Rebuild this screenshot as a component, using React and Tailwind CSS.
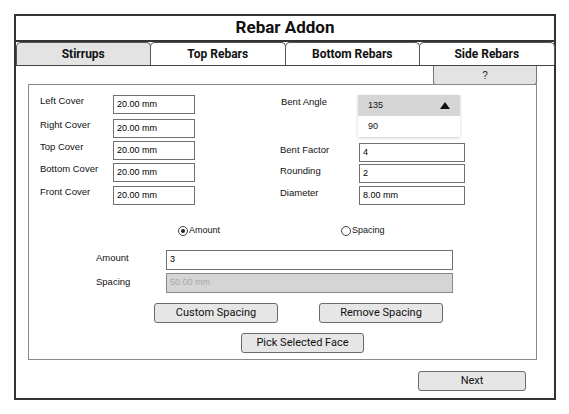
import React from 'react';

const font = { fontFamily: '"Liberation Sans", Arial, sans-serif' };
const roboto = { fontFamily: 'Roboto, "Liberation Sans", sans-serif' };

const leftRows = [
  { label: 'Left Cover', value: '20.00 mm', mt: 'mt-0' },
  { label: 'Right Cover', value: '20.00 mm', mt: 'mt-[5px]' },
  { label: 'Top Cover', value: '20.00 mm', mt: 'mt-[3px]' },
  { label: 'Bottom Cover', value: '20.00 mm', mt: 'mt-[3px]' },
  { label: 'Front Cover', value: '20.00 mm', mt: 'mt-[4px]' },
];

const rightRows = [
  { label: 'Bent Factor', value: '4', mt: 'mt-[6px]' },
  { label: 'Rounding', value: '2', mt: 'mt-[2px]' },
  { label: 'Diameter', value: '8.00 mm', mt: 'mt-[3px]' },
];

const Field = ({ value, className }) => (
  <div className={`h-[19px] border border-[#707070] bg-white flex items-center pl-[3px] text-[9px] text-black ${className}`}>
    {value}
  </div>
);

const Btn = ({ children, className }) => (
  <button
    className={`h-[20px] border border-[#6a6a6a] rounded-[3px] bg-[#e6e6e6] text-[11px] text-[#111] ${className}`}
    style={roboto}
  >
    {children}
  </button>
);

const Radio = ({ checked, label }) => (
  <div className="flex items-center gap-[1px] text-[9px] text-[#111]">
    <div className="w-[10px] h-[10px] rounded-full border border-[#444] flex items-center justify-center">
      {checked && <div className="w-[4px] h-[4px] rounded-full bg-[#222]" />}
    </div>
    <span>{label}</span>
  </div>
);

export default function App() {
  const tabs = ['Stirrups', 'Top Rebars', 'Bottom Rebars', 'Side Rebars'];
  return (
    <div className="w-[569px] h-[414px] bg-white pt-[14px] pl-[14px]" style={font}>
      <div className="w-[542px] h-[386px] border-2 border-[#333] flex flex-col">
        <div
          className="h-[26px] border-b-2 border-[#333] flex items-center justify-center text-[17px] font-bold text-[#111]"
          style={roboto}
        >
          Rebar Addon
        </div>
        <div className="h-[24px] flex border-b border-[#444]" style={roboto}>
          {tabs.map((t, i) => (
            <div
              key={t}
              className={`flex-1 -mx-[0.5px] rounded-t-[5px] border-x border-t border-[#555] flex items-center justify-center text-[12px] font-bold text-[#111] ${i === 0 ? 'bg-[#e3e3e3]' : 'bg-white'}`}
            >
              {t}
            </div>
          ))}
        </div>
        <div className="flex-1 pl-[12px] pr-[17px] flex flex-col">
          <div className="flex justify-end">
            <div className="w-[104px] h-[19px] border border-t-0 border-[#777] rounded-b-[3px] bg-[#e3e3e3] flex items-center justify-center text-[10px] text-[#222]">
              ?
            </div>
          </div>
          <div className="h-[276px] -mt-[1px] border border-[#8a8a8a] flex flex-col">
            <div className="flex pt-[10px]">
              <div className="pl-[11px] w-[251px] flex flex-col">
                {leftRows.map((r) => (
                  <div key={r.label} className={`flex items-start ${r.mt}`}>
                    <div className="w-[73px] text-[9.5px] leading-[12px] text-[#111]">{r.label}</div>
                    <Field value={r.value} className="w-[82px]" />
                  </div>
                ))}
              </div>
              <div className="flex flex-col">
                <div className="flex items-start">
                  <div className="w-[78px] pl-[1px] text-[9.5px] leading-[14px] text-[#111]">Bent Angle</div>
                  <div className="w-[102px] shadow-[0_1px_3px_rgba(0,0,0,0.2)]">
                    <div className="h-[21px] bg-[#d5d5d5] flex items-center justify-between pl-[10px] pr-[10px] text-[9px] text-[#111]">
                      <span>135</span>
                      <svg width="10" height="7" viewBox="0 0 10 7">
                        <path d="M0 7 L5 0 L10 7 Z" fill="#111" />
                      </svg>
                    </div>
                    <div className="h-[21px] bg-white flex items-center pl-[10px] text-[9px] text-[#111]">90</div>
                  </div>
                </div>
                {rightRows.map((r) => (
                  <div key={r.label} className={`flex items-start ${r.mt}`}>
                    <div className="w-[79px] pt-[1px] text-[9.5px] leading-[12px] text-[#111]">{r.label}</div>
                    <Field value={r.value} className="w-[106px]" />
                  </div>
                ))}
              </div>
            </div>
            <div className="flex mt-[20px] h-[12px] items-center">
              <div className="ml-[149px]">
                <Radio checked label="Amount" />
              </div>
              <div className="ml-[121px]">
                <Radio label="Spacing" />
              </div>
            </div>
            <div className="flex items-start mt-[13px]">
              <div className="pl-[67px] w-[137px] pt-[2px] text-[9.5px] leading-[12px] text-[#111]">Amount</div>
              <div className="w-[287px] h-[20px] border border-[#707070] bg-white flex items-center pl-[3px] text-[9px] text-black">3</div>
            </div>
            <div className="flex items-start mt-[3px]">
              <div className="pl-[67px] w-[137px] pt-[3px] text-[9.5px] leading-[12px] text-[#111]">Spacing</div>
              <div className="w-[287px] h-[20px] border border-[#8a8a8a] bg-[#d5d5d5] flex items-center pl-[3px] text-[9px] text-[#a8a8a8]">50.00 mm</div>
            </div>
            <div className="flex mt-[10px]">
              <Btn className="ml-[125px] w-[124px]">Custom Spacing</Btn>
              <Btn className="ml-[41px] w-[124px]">Remove Spacing</Btn>
            </div>
            <div className="flex mt-[10px]">
              <Btn className="ml-[212px] w-[123px] h-[19px]">Pick Selected Face</Btn>
            </div>
          </div>
          <div className="flex justify-end mt-[11px] pr-[11px]">
            <Btn className="w-[108px] h-[20px]">Next</Btn>
          </div>
        </div>
      </div>
    </div>
  );
}
